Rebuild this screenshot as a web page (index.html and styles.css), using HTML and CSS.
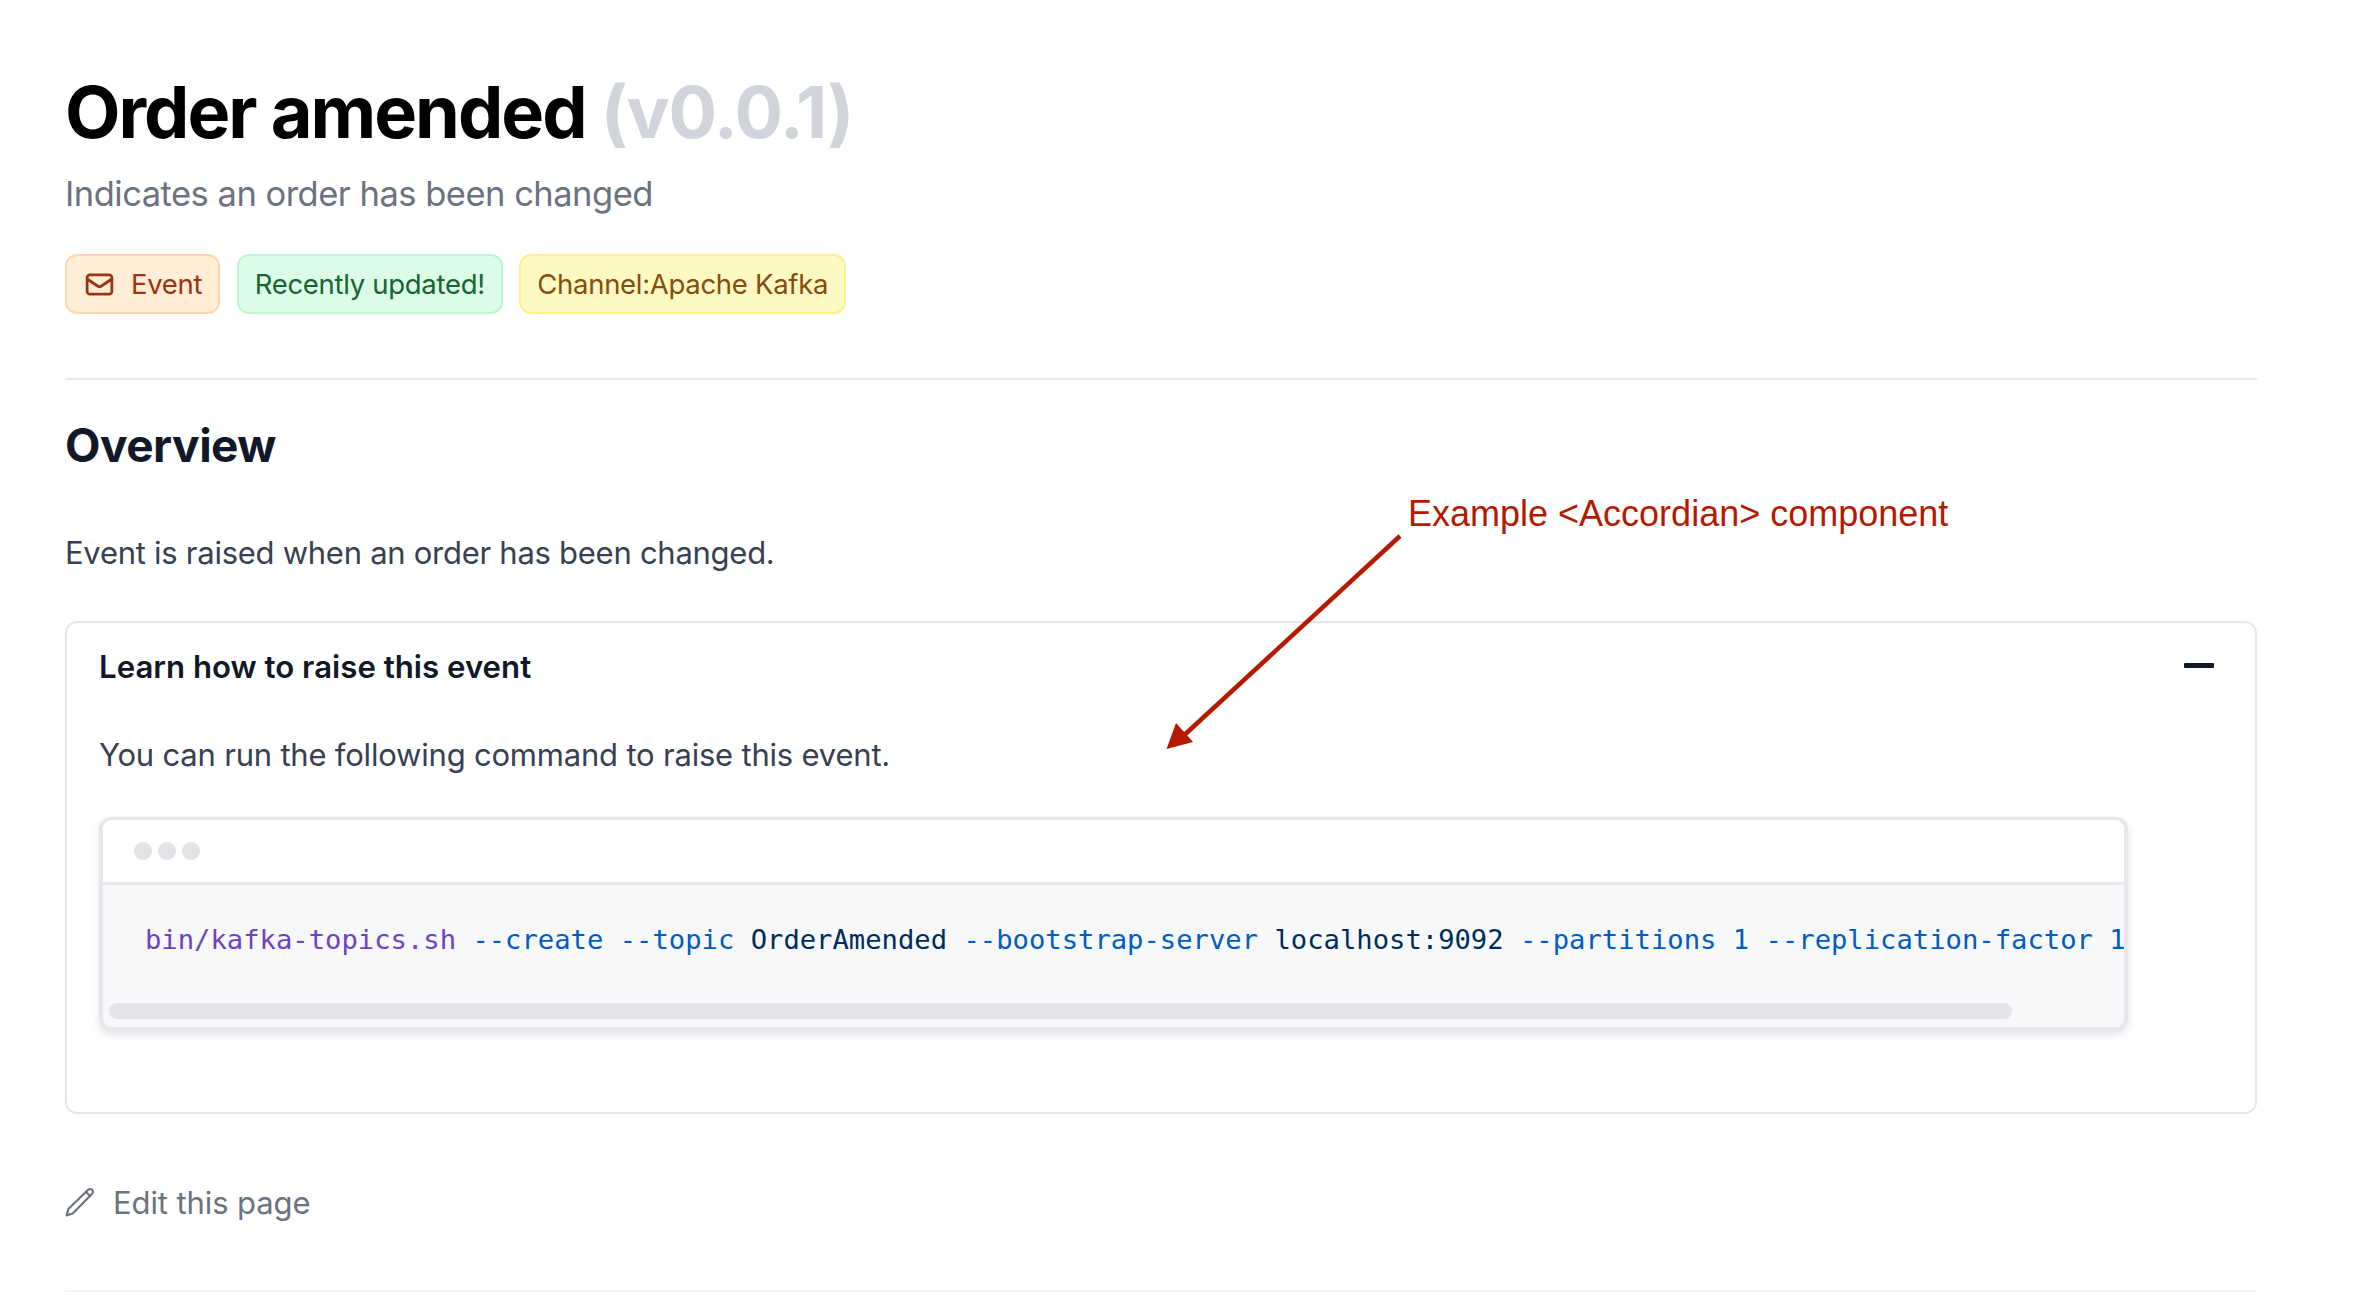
FILE: index.html
```html
<!DOCTYPE html>
<html lang="en">
<head>
<meta charset="utf-8">
<title>Order amended</title>
<link rel="stylesheet" href="styles.css">
</head>
<body>
<main class="page">
  <header class="head">
    <h1 class="title">Order amended <span class="version">(v0.0.1)</span></h1>
    <p class="subtitle">Indicates an order has been changed</p>
    <div class="badges">
      <span class="badge badge-orange">
        <svg class="badge-icon" viewBox="0 0 24 24" fill="none" stroke="currentColor" stroke-width="2" stroke-linecap="round" stroke-linejoin="round"><path d="M3 8l7.89 5.26a2 2 0 002.22 0L21 8M5 19h14a2 2 0 002-2V7a2 2 0 00-2-2H5a2 2 0 00-2 2v10a2 2 0 002 2z"/></svg>
        Event
      </span>
      <span class="badge badge-green">Recently updated!</span>
      <span class="badge badge-yellow">Channel:Apache Kafka</span>
    </div>
  </header>
  <section class="content">
    <h2 class="section-title">Overview</h2>
    <p class="lead">Event is raised when an order has been changed.</p>
    <div class="accordion">
      <div class="accordion-head">
        <span class="accordion-title">Learn how to raise this event</span>
        <span class="minus"></span>
      </div>
      <p class="accordion-text">You can run the following command to raise this event.</p>
      <div class="code-window">
        <div class="code-bar"><i class="dot"></i><i class="dot"></i><i class="dot"></i></div>
        <div class="code-body">
          <pre class="code"><span class="fn">bin/kafka-topics.sh</span> <span class="kw">--create</span> <span class="kw">--topic</span> OrderAmended <span class="kw">--bootstrap-server</span> localhost:9092 <span class="kw">--partitions</span> <span class="kw">1</span> <span class="kw">--replication-factor</span> <span class="kw">1</span></pre>
          <div class="scroll-thumb"></div>
        </div>
      </div>
    </div>
    <a class="edit" href="#">
      <svg class="edit-icon" viewBox="0 0 28 28" fill="none" stroke="currentColor" stroke-width="2" stroke-linecap="round" stroke-linejoin="round"><path d="M1.5 26.5l1.6-6L21.6 2.6a2.6 2.6 0 013.7 0 2.6 2.6 0 010 3.7L7.2 24.800z"/><path d="M19.6 4.6l3.8 3.8"/></svg>
      Edit this page
    </a>
  </section>
  <hr class="rule-light">
  <div class="note">Example &lt;Accordian&gt; component</div>
  <svg class="note-arrow" viewBox="0 0 240 220" fill="none"><path d="M234 3L14 206" stroke="#b51a00" stroke-width="4.5"/><path d="M0.5 216L10 190 27 209z" fill="#b51a00"/></svg>
</main>
</body>
</html>
```
FILE: styles.css
```css
* { box-sizing: border-box; }
html, body { margin: 0; background: #fff; }
body { font-family: Inter, "Liberation Sans", sans-serif; color: #374151; height: 1308px; overflow: hidden; }
.page { position: relative; padding: 64px 103px 0 65px; }
.head { border-bottom: 2px solid #e5e7eb; height: 316px; }
.title { margin: 0; font-size: 72px; line-height: 96px; font-weight: 700; letter-spacing: -2px; color: #000; }
.version { color: #d1d5db; letter-spacing: -1.2px; }
.subtitle { margin: 6px 0 0; font-size: 34.5px; line-height: 56px; letter-spacing: -0.5px; color: #6b7280; }
.badges { display: flex; gap: 16.5px; margin-top: 32px; }
.badge { display: inline-flex; align-items: center; height: 60px; padding: 0 16px; border-width: 2px; border-style: solid; border-radius: 12px; font-size: 27.5px; letter-spacing: -0.3px; }
.badge-orange { background: #ffedd5; border-color: #fed7aa; color: #9a3412; }
.badge-green { background: #dcfce7; border-color: #bbf7d0; color: #166534; }
.badge-yellow { background: #fef9c3; border-color: #fef08a; color: #854d0e; }
.badge-icon { width: 33px; height: 33px; margin-right: 15px; }
.section-title { margin: 0; padding-top: 33px; font-size: 46px; line-height: 64px; font-weight: 700; color: #111827; letter-spacing: -0.5px; }
.lead { margin: 48px 0 0; font-size: 31px; line-height: 56px; letter-spacing: -0.27px; }
.accordion { margin-top: 40px; height: 493px; padding: 0 32px; border: 2px solid #e5e7eb; border-radius: 12px; }
.accordion-head { display: flex; justify-content: space-between; align-items: center; height: 88px; padding-right: 9px; }
.accordion-title { font-size: 31.2px; font-weight: 600; color: #111827; }
.minus { width: 30px; height: 5px; margin-bottom: 3px; background: #111827; border-radius: 1px; }
.accordion-text { margin: 0; padding-top: 16px; font-size: 31px; line-height: 56px; letter-spacing: -0.2px; }
.code-window { margin-top: 34px; width: 2029px; height: 214px; border: 4px solid #e5e7eb; border-top-width: 3px; border-radius: 12px; box-shadow: 0 4px 8px rgba(0,0,0,0.1); overflow: hidden; background: #f6f8fa; }
.code-bar { display: flex; align-items: center; gap: 6px; height: 65px; padding-left: 31px; background: #fff; border-bottom: 3px solid #e5e7eb; }
.dot { width: 18px; height: 18px; border-radius: 50%; background: #e1e3e6; }
.code { margin: 0; padding: 35px 0 0 42px; height: 118px; overflow: hidden; font-family: "DejaVu Sans Mono", monospace; font-size: 27.2px; line-height: 40px; color: #002b5c; white-space: pre; }
.fn { color: #6f42c1; }
.kw { color: #005cc5; }
.scroll-thumb { width: 1903px; height: 16px; margin-left: 6px; border-radius: 8px; background: #e2e4e8; }
.edit { display: flex; align-items: center; gap: 18px; margin-top: 60px; height: 56px; font-size: 31px; letter-spacing: -0.1px; color: #6b7280; text-decoration: none; }
.edit-icon { width: 30px; height: 30px; }
.rule-light { margin: 60px 0 0; border: 0; border-top: 2px solid #f3f4f6; }
.note { position: absolute; left: 1408px; top: 490px; font-family: "Liberation Sans", sans-serif; font-size: 36px; line-height: 48px; color: #b51a00; white-space: nowrap; }
.note-arrow { position: absolute; left: 1166px; top: 533px; width: 240px; height: 220px; }
```
